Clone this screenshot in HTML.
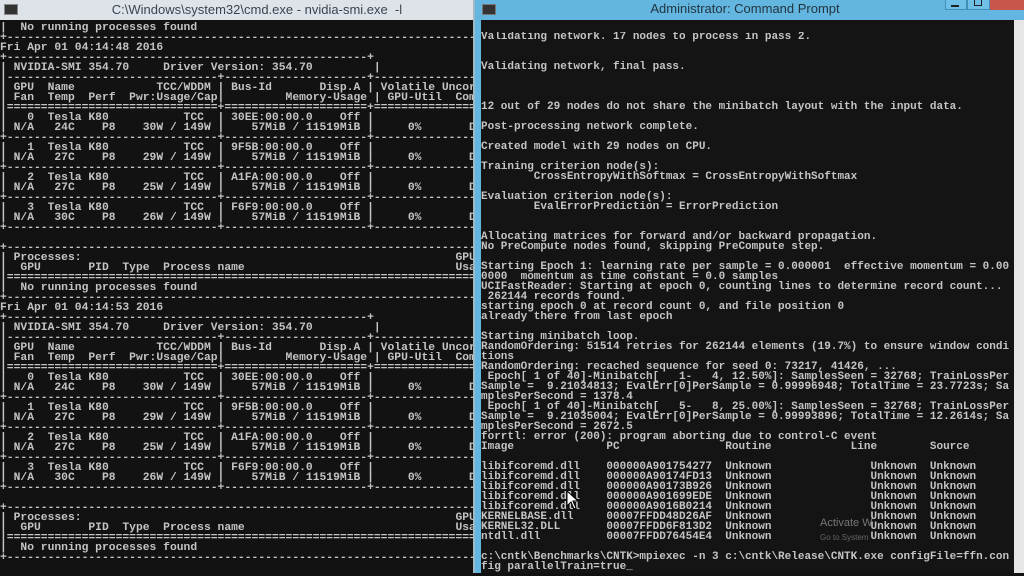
<!DOCTYPE html>
<html><head><meta charset="utf-8"><style>
*{margin:0;padding:0}
body{width:1024px;height:573px;overflow:hidden;background:#111;position:relative;font-family:"Liberation Mono",monospace}
.tb{position:absolute;top:0;height:20px}
pre{position:absolute;font-family:"Liberation Mono",monospace;font-weight:bold;color:#c4c4c4;line-height:10px;white-space:pre;overflow:hidden}
</style></head><body>
<!-- left window -->
<div class="tb" style="left:0;width:474px;background:#dde3e9"></div>
<div style="position:absolute;left:4px;top:4px;width:12px;height:9px;background:#333;border:1px solid #888"></div>
<div style="position:absolute;left:0;top:2px;width:474px;text-align:center;font:13px 'Liberation Sans',sans-serif;color:#3a4450;padding-left:40px;box-sizing:border-box">C:\Windows\system32\cmd.exe - nvidia-smi.exe&nbsp;&nbsp;-l</div>
<div style="position:absolute;left:0;top:20px;width:473px;height:553px;background:#121212"></div>
<pre style="left:0;top:20px;width:473px;height:553px;font-size:11.33px;padding-top:3px">|  No running processes found                                                 |
+-----------------------------------------------------------------------------+
Fri Apr 01 04:14:48 2016
+-----------------------------------------------------+
| NVIDIA-SMI 354.70     Driver Version: 354.70         |
|-------------------------------+---------------------+----------------------+
| GPU  Name            TCC/WDDM | Bus-Id       Disp.A | Volatile Uncorr. ECC |
| Fan  Temp  Perf  Pwr:Usage/Cap|         Memory-Usage | GPU-Util  Compute M. |
|===============================+=====================+======================|
|   0  Tesla K80           TCC  | 30EE:00:00.0    Off |                  Off |
| N/A   24C    P8    30W / 149W |    57MiB / 11519MiB |     0%       Default |
+-------------------------------+---------------------+----------------------+
|   1  Tesla K80           TCC  | 9F5B:00:00.0    Off |                  Off |
| N/A   27C    P8    29W / 149W |    57MiB / 11519MiB |     0%       Default |
+-------------------------------+---------------------+----------------------+
|   2  Tesla K80           TCC  | A1FA:00:00.0    Off |                  Off |
| N/A   27C    P8    25W / 149W |    57MiB / 11519MiB |     0%       Default |
+-------------------------------+---------------------+----------------------+
|   3  Tesla K80           TCC  | F6F9:00:00.0    Off |                  Off |
| N/A   30C    P8    26W / 149W |    57MiB / 11519MiB |     0%       Default |
+-------------------------------+---------------------+----------------------+

+-----------------------------------------------------------------------------+
| Processes:                                                       GPU Memory |
|  GPU       PID  Type  Process name                               Usage      |
|=============================================================================|
|  No running processes found                                                 |
+-----------------------------------------------------------------------------+
Fri Apr 01 04:14:53 2016
+-----------------------------------------------------+
| NVIDIA-SMI 354.70     Driver Version: 354.70         |
|-------------------------------+---------------------+----------------------+
| GPU  Name            TCC/WDDM | Bus-Id       Disp.A | Volatile Uncorr. ECC |
| Fan  Temp  Perf  Pwr:Usage/Cap|         Memory-Usage | GPU-Util  Compute M. |
|===============================+=====================+======================|
|   0  Tesla K80           TCC  | 30EE:00:00.0    Off |                  Off |
| N/A   24C    P8    30W / 149W |    57MiB / 11519MiB |     0%       Default |
+-------------------------------+---------------------+----------------------+
|   1  Tesla K80           TCC  | 9F5B:00:00.0    Off |                  Off |
| N/A   27C    P8    29W / 149W |    57MiB / 11519MiB |     0%       Default |
+-------------------------------+---------------------+----------------------+
|   2  Tesla K80           TCC  | A1FA:00:00.0    Off |                  Off |
| N/A   27C    P8    25W / 149W |    57MiB / 11519MiB |     0%       Default |
+-------------------------------+---------------------+----------------------+
|   3  Tesla K80           TCC  | F6F9:00:00.0    Off |                  Off |
| N/A   30C    P8    26W / 149W |    57MiB / 11519MiB |     0%       Default |
+-------------------------------+---------------------+----------------------+

+-----------------------------------------------------------------------------+
| Processes:                                                       GPU Memory |
|  GPU       PID  Type  Process name                               Usage      |
|=============================================================================|
|  No running processes found                                                 |
+-----------------------------------------------------------------------------+</pre>
<!-- right window -->
<div style="position:absolute;left:473px;top:0;width:2px;height:573px;background:#9fb8c8"></div>
<div style="position:absolute;left:475px;top:0;width:549px;height:573px;background:#62b6e0"></div>
<div style="position:absolute;left:482px;top:4px;width:12px;height:9px;background:#333;border:1px solid #777"></div>
<div style="position:absolute;left:560px;top:1px;width:370px;text-align:center;font:13px 'Liberation Sans',sans-serif;color:#24343f">Administrator: Command Prompt</div>
<div style="position:absolute;left:945px;top:0;width:20px;height:9px;background:#6fc0e6;border:1px solid #3f8fb8;border-top:none"></div>
<div style="position:absolute;left:951px;top:5px;width:8px;height:2px;background:#222"></div>
<div style="position:absolute;left:967px;top:0;width:21px;height:9px;background:#6fc0e6;border:1px solid #3f8fb8;border-top:none"></div>
<div style="position:absolute;left:974px;top:0;width:6px;height:5px;border:1px solid #222;border-top:none"></div>
<div style="position:absolute;left:990px;top:0;width:34px;height:10px;background:#c9564a"></div>
<div style="position:absolute;left:481px;top:20px;width:533px;height:553px;background:#141414"></div>
<div style="position:absolute;left:1014px;top:20px;width:10px;height:553px;background:#e6e6e6"></div>
<pre style="left:481px;top:32px;width:533px;height:541px;font-size:11px">Validating network. 17 nodes to process in pass 2.


Validating network, final pass.



12 out of 29 nodes do not share the minibatch layout with the input data.

Post-processing network complete.

Created model with 29 nodes on CPU.

Training criterion node(s):
        CrossEntropyWithSoftmax = CrossEntropyWithSoftmax

Evaluation criterion node(s):
        EvalErrorPrediction = ErrorPrediction


Allocating matrices for forward and/or backward propagation.
No PreCompute nodes found, skipping PreCompute step.

Starting Epoch 1: learning rate per sample = 0.000001  effective momentum = 0.00
0000  momentum as time constant = 0.0 samples
UCIFastReader: Starting at epoch 0, counting lines to determine record count...
 262144 records found.
starting epoch 0 at record count 0, and file position 0
already there from last epoch

Starting minibatch loop.
RandomOrdering: 51514 retries for 262144 elements (19.7%) to ensure window condi
tions
RandomOrdering: recached sequence for seed 0: 73217, 41426, ...
 Epoch[ 1 of 40]-Minibatch[   1-   4, 12.50%]: SamplesSeen = 32768; TrainLossPer
Sample =  9.21034813; EvalErr[0]PerSample = 0.99996948; TotalTime = 23.7723s; Sa
mplesPerSecond = 1378.4
 Epoch[ 1 of 40]-Minibatch[   5-   8, 25.00%]: SamplesSeen = 32768; TrainLossPer
Sample =  9.21035004; EvalErr[0]PerSample = 0.99993896; TotalTime = 12.2614s; Sa
mplesPerSecond = 2672.5
forrtl: error (200): program aborting due to control-C event
Image              PC                Routine            Line        Source

libifcoremd.dll    000000A901754277  Unknown               Unknown  Unknown
libifcoremd.dll    000000A90174FD13  Unknown               Unknown  Unknown
libifcoremd.dll    000000A90173B926  Unknown               Unknown  Unknown
libifcoremd.dll    000000A901699EDE  Unknown               Unknown  Unknown
libifcoremd.dll    000000A9016B0214  Unknown               Unknown  Unknown
KERNELBASE.dll     00007FFDD48D26AF  Unknown               Unknown  Unknown
KERNEL32.DLL       00007FFDD6F813D2  Unknown               Unknown  Unknown
ntdll.dll          00007FFDD76454E4  Unknown               Unknown  Unknown

c:\cntk\Benchmarks\CNTK&gt;mpiexec -n 3 c:\cntk\Release\CNTK.exe configFile=ffn.con
fig parallelTrain=true_</pre>
<div style="position:absolute;left:820px;top:517px;font:11px 'Liberation Sans',sans-serif;color:#777">Activate W</div>
<div style="position:absolute;left:820px;top:533px;font:8px 'Liberation Sans',sans-serif;color:#666">Go to System</div>
<svg style="position:absolute;left:566px;top:490px" width="14" height="20" viewBox="0 0 14 20"><path d="M1 1 L1 16 L5 12 L8 19 L10 18 L7 11 L12 11 Z" fill="#fff" stroke="#000" stroke-width="1"/></svg>
</body></html>
